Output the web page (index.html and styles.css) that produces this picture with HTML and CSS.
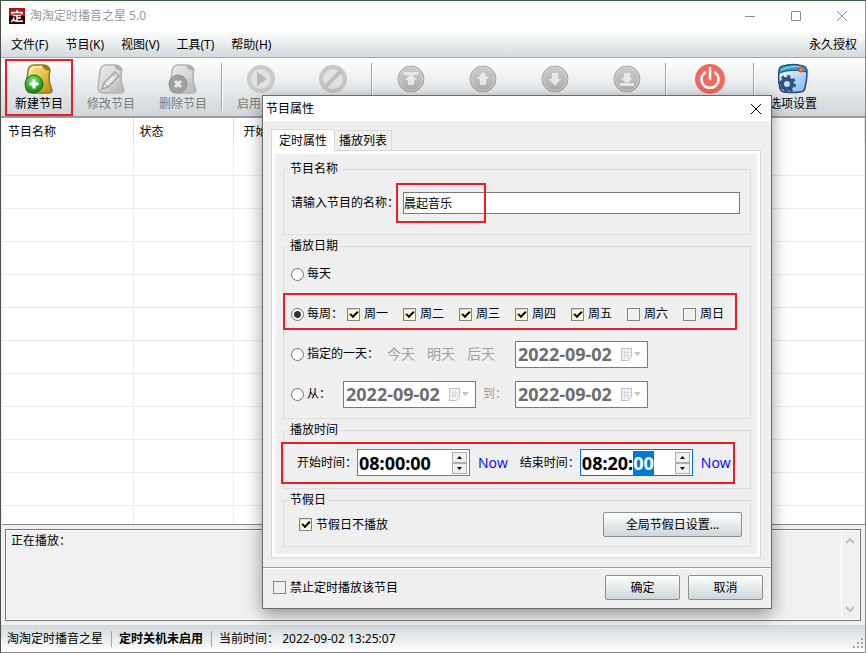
FILE: index.html
```html
<!DOCTYPE html>
<html lang="zh-CN">
<head>
	<meta charset="UTF-8">
	<title>淘淘定时播音之星 5.0</title>
	<link rel="stylesheet" href="styles.css">
</head>
<body>
	<svg class="defs" width="0" height="0" aria-hidden="true">
		<defs>
			<linearGradient id="gold" x1="0" y1="0" x2="1" y2="1">
				<stop offset="0" stop-color="#fbe88a"/><stop offset=".5" stop-color="#e6c352"/><stop offset="1" stop-color="#b88408"/>
			</linearGradient>
			<linearGradient id="silver" x1="0" y1="0" x2="1" y2="1">
				<stop offset="0" stop-color="#ececec"/><stop offset=".5" stop-color="#d8d8d8"/><stop offset="1" stop-color="#b0b0b0"/>
			</linearGradient>
			<radialGradient id="green" cx=".45" cy=".3" r=".7">
				<stop offset="0" stop-color="#8fe07c"/><stop offset=".6" stop-color="#35ad30"/><stop offset="1" stop-color="#0d7a12"/>
			</radialGradient>
			<linearGradient id="ball" x1="0" y1="0" x2="0" y2="1">
				<stop offset="0" stop-color="#cdcdcd"/><stop offset="1" stop-color="#adadad"/>
			</linearGradient>
			<linearGradient id="sky" x1="0" y1="0" x2="1" y2="1">
				<stop offset="0" stop-color="#ffffff"/><stop offset="1" stop-color="#79b8f2"/>
			</linearGradient>
			<path id="page" d="M5 8Q6 2 11 2H20Q24 2 26 5L27 7Q25 16 27 21L29 27Q29 30 25 30H9Q3 30 3 24Z"/>
			<path id="fold" d="M20 3Q21 7 27 7Q25 4 20 3Z"/>
		</defs>
	</svg>

	<div class="window">
		<header class="titlebar">
			<svg class="logo" viewBox="0 0 16 16">
				<rect width="16" height="16" fill="#3a0000"/><rect width="16" height="8" fill="#b01414"/>
				<path d="M8 2v2M3 6.500V4.500h10v2M4 7.500h8M8 7.500v5M8 10h4M5 9.500c0 2-1 3-3 4.500M4 12c2 1 5 1.500 10 1" fill="none" stroke="#fff" stroke-width="1.500"/>
			</svg>
			<span class="title">淘淘定时播音之星 5.0</span>
			<div class="win-buttons">
				<button aria-label="最小化"><svg viewBox="0 0 12 12"><path d="M1 6.5h10"/></svg></button>
				<button aria-label="最大化"><svg viewBox="0 0 12 12"><path d="M1.500 1.500h9v9h-9z"/></svg></button>
				<button aria-label="关闭"><svg viewBox="0 0 12 12"><path d="M1 1l10 10M11 1L1 11"/></svg></button>
			</div>
		</header>

		<nav class="menubar">
			<a href="#">文件(F)</a>
			<a href="#">节目(K)</a>
			<a href="#">视图(V)</a>
			<a href="#">工具(T)</a>
			<a href="#">帮助(H)</a>
			<a href="#" class="licence">永久授权</a>
		</nav>

		<div class="toolbar">
			<button class="tool marked">
				<svg viewBox="0 0 32 32">
					<use href="#page" fill="url(#gold)" stroke="#9a7414" stroke-width="1.500"/>
					<use href="#fold" fill="#b88a1c" stroke="#8a6408"/>
					<path d="M7 10Q8 4 12 4h7" fill="none" stroke="#fff8c8" stroke-width="1.500"/>
					<circle cx="11" cy="21" r="9" fill="url(#green)" stroke="#16701a"/>
					<path d="M11 16.500v9M6.500 21h9" stroke="#fff" stroke-width="3"/>
				</svg>
				<span>新建节目</span>
			</button>
			<button class="tool" disabled>
				<svg viewBox="0 0 32 32">
					<use href="#page" fill="url(#silver)" stroke="#b4b4b4" stroke-width="1.500"/>
					<use href="#fold" fill="#b4b4b4" stroke="#a6a6a6"/>
					<path d="M7 26l2-6L20 9l4 4-11 11z" fill="#e6e6e6" stroke="#a6a6a6" stroke-width="1.500"/>
					<path d="M18 11l4 4M9 20l4 4" stroke="#a6a6a6"/>
				</svg>
				<span>修改节目</span>
			</button>
			<button class="tool" disabled>
				<svg viewBox="0 0 32 32">
					<use href="#page" fill="url(#silver)" stroke="#b4b4b4" stroke-width="1.500"/>
					<use href="#fold" fill="#b4b4b4" stroke="#a6a6a6"/>
					<circle cx="11" cy="21" r="9" fill="#a0a0a0" stroke="#8e8e8e"/>
					<path d="M8 18l6 6M14 18l-6 6" stroke="#e8e8e8" stroke-width="3"/>
				</svg>
				<span>删除节目</span>
			</button>
			<i class="sep"></i>
			<button class="tool" disabled>
				<svg viewBox="0 0 32 32">
					<circle cx="16" cy="16" r="12" fill="#e2e2e2" stroke="#cacaca" stroke-width="4"/>
					<path d="M12 9l10 7-10 7z" fill="#b8b8b8"/>
				</svg>
				<span>启用节目</span>
			</button>
			<button class="tool" disabled aria-label="停用节目">
				<svg viewBox="0 0 32 32">
					<circle cx="16" cy="16" r="12" fill="#e2e2e2" stroke="#c6c6c6" stroke-width="4"/>
					<path d="M8 24L24 8" stroke="#c0c0c0" stroke-width="4"/>
				</svg>
			</button>
			<i class="sep"></i>
			<button class="tool" disabled aria-label="置顶">
				<svg viewBox="0 0 32 32">
					<circle cx="16" cy="16" r="13" fill="url(#ball)" stroke="#a6a6a6"/><circle cx="16" cy="16" r="11.500" fill="none" stroke="#d2d2d2"/>
					<path d="M9 9h14v3H9zM16 11l6 6h-3v5h-6v-5h-3z" fill="#e8e8e8"/>
				</svg>
			</button>
			<button class="tool" disabled aria-label="上移">
				<svg viewBox="0 0 32 32">
					<circle cx="16" cy="16" r="13" fill="url(#ball)" stroke="#a6a6a6"/><circle cx="16" cy="16" r="11.500" fill="none" stroke="#d2d2d2"/>
					<path d="M16 9l6 7h-3v6h-6v-6h-3z" fill="#e8e8e8"/>
				</svg>
			</button>
			<button class="tool" disabled aria-label="下移">
				<svg viewBox="0 0 32 32">
					<circle cx="16" cy="16" r="13" fill="url(#ball)" stroke="#a6a6a6"/><circle cx="16" cy="16" r="11.500" fill="none" stroke="#d2d2d2"/>
					<path d="M16 23l6-7h-3v-6h-6v6h-3z" fill="#e8e8e8"/>
				</svg>
			</button>
			<button class="tool" disabled aria-label="置底">
				<svg viewBox="0 0 32 32">
					<circle cx="16" cy="16" r="13" fill="url(#ball)" stroke="#a6a6a6"/><circle cx="16" cy="16" r="11.500" fill="none" stroke="#d2d2d2"/>
					<path d="M9 20h14v3H9zM16 21l6-6h-3v-5h-6v5h-3z" fill="#e8e8e8"/>
				</svg>
			</button>
			<i class="sep"></i>
			<button class="tool wide" aria-label="定时关机">
				<svg viewBox="0 0 32 32">
					<circle cx="16" cy="16" r="15" fill="#ef6a62"/>
					<path d="M11 9.500a8.500 8.500 0 1 0 10 0M16 5v11" fill="none" stroke="#fff" stroke-width="2.500" stroke-linecap="round"/>
				</svg>
			</button>
			<i class="sep"></i>
			<button class="tool">
				<svg viewBox="0 0 32 32">
					<path d="M6 3q10-3 20 0 4 1 4 6 0 8-2 16-1 4-5 4-8 1-15 0-4 0-5-4Q1 17 2 8q0-4 4-5z" fill="url(#sky)" stroke="#29487c" stroke-width="1.500"/>
					<path d="M6 3q10-3 20 0 4 1 4 6-14-4-28 1Q2 4 6 3z" fill="#25a6cf" stroke="#29487c"/>
					<path d="M4 7q10-5 21-3" fill="none" stroke="#9ce6f6"/>
					<circle cx="24" cy="6.500" r="2.500" fill="#ff7a2d" stroke="#c24a10"/>
					<circle cx="10" cy="21" r="5" fill="none" stroke="#34507f" stroke-width="4"/>
					<circle cx="10" cy="21" r="7.500" fill="none" stroke="#34507f" stroke-width="3" stroke-dasharray="3 2.890"/>
				</svg>
				<span>选项设置</span>
			</button>
		</div>

		<main class="list">
			<table>
				<thead>
					<tr><th class="c-name">节目名称</th><th class="c-state">状态</th><th>开始时间</th></tr>
				</thead>
				<tbody>
					<tr><td></td><td></td><td></td></tr>
					<tr><td></td><td></td><td></td></tr>
					<tr><td></td><td></td><td></td></tr>
					<tr><td></td><td></td><td></td></tr>
					<tr><td></td><td></td><td></td></tr>
					<tr><td></td><td></td><td></td></tr>
					<tr><td></td><td></td><td></td></tr>
					<tr><td></td><td></td><td></td></tr>
					<tr><td></td><td></td><td></td></tr>
					<tr><td></td><td></td><td></td></tr>
					<tr><td></td><td></td><td></td></tr>
					<tr><td></td><td></td><td></td></tr>
				</tbody>
			</table>
		</main>

		<section class="playing">
			<textarea readonly aria-label="正在播放">正在播放：</textarea>
			<div class="scroll">
				<svg viewBox="0 0 8 6"><path d="M0 5l4-4 4 4"/></svg>
				<svg viewBox="0 0 8 6"><path d="M0 1l4 4 4-4"/></svg>
			</div>
		</section>

		<footer class="status">
			<span>淘淘定时播音之星</span>
			<b>定时关机未启用</b>
			<span>当前时间：&nbsp;2022-09-02 13:25:07</span>
			<svg class="grip" viewBox="0 0 11 11"><path d="M8 0h2v2H8zM4 4h2v2H4zM8 4h2v2H8zM0 8h2v2H0zM4 8h2v2H4zM8 8h2v2H8z"/></svg>
		</footer>
	</div>

	<form class="dialog" role="dialog" aria-labelledby="dlg-title" onsubmit="return false">
		<div class="dlg-title">
			<span id="dlg-title">节目属性</span>
			<button type="button" aria-label="关闭"><svg viewBox="0 0 12 12"><path d="M1 1l10 10M11 1L1 11"/></svg></button>
		</div>

		<div class="dlg-body">
			<div class="tabs" role="tablist">
				<button type="button" role="tab" class="tab on" aria-selected="true">定时属性</button>
				<button type="button" role="tab" class="tab">播放列表</button>
			</div>
			<div class="pane">
				<fieldset class="f-name">
					<legend>节目名称</legend>
					<label for="pname">请输入节目的名称：</label>
					<input type="text" id="pname" value="晨起音乐">
				</fieldset>

				<fieldset class="f-date">
					<legend>播放日期</legend>
					<div class="row">
						<label class="opt"><input type="radio" name="mode">每天</label>
					</div>
					<div class="row week">
						<label class="opt"><input type="radio" name="mode" checked>每周：</label>
						<label class="day"><input type="checkbox" checked>周一</label>
						<label class="day"><input type="checkbox" checked>周二</label>
						<label class="day"><input type="checkbox" checked>周三</label>
						<label class="day"><input type="checkbox" checked>周四</label>
						<label class="day"><input type="checkbox" checked>周五</label>
						<label class="day"><input type="checkbox">周六</label>
						<label class="day"><input type="checkbox">周日</label>
					</div>
					<div class="row once">
						<label class="opt"><input type="radio" name="mode">指定的一天：</label>
						<div class="quick">
							<a href="#">今天</a>
							<a href="#">明天</a>
							<a href="#">后天</a>
						</div>
						<div class="date">
							<input type="text" value="2022-09-02" aria-label="日期" disabled>
							<svg viewBox="0 0 20 13"><path d="M.5.5h10v8l-3 4h-7z" fill="#f2f2f6" stroke="#c3bfc4"/><path d="M2 4.500h7M2 7.500h7M3.500 3v7M6.500 3v7" stroke="#d6d9e6"/><path d="M13 4h7l-3.500 4z" fill="#c4c4ba"/></svg>
						</div>
					</div>
					<div class="row range">
						<label class="opt"><input type="radio" name="mode">从：</label>
						<div class="date">
							<input type="text" value="2022-09-02" aria-label="开始日期" disabled>
							<svg viewBox="0 0 20 13"><path d="M.5.5h10v8l-3 4h-7z" fill="#f2f2f6" stroke="#c3bfc4"/><path d="M2 4.500h7M2 7.500h7M3.500 3v7M6.500 3v7" stroke="#d6d9e6"/><path d="M13 4h7l-3.500 4z" fill="#c4c4ba"/></svg>
						</div>
						<label class="to" for="dto">到：</label>
						<div class="date">
							<input type="text" id="dto" value="2022-09-02" disabled>
							<svg viewBox="0 0 20 13"><path d="M.5.5h10v8l-3 4h-7z" fill="#f2f2f6" stroke="#c3bfc4"/><path d="M2 4.500h7M2 7.500h7M3.500 3v7M6.500 3v7" stroke="#d6d9e6"/><path d="M13 4h7l-3.500 4z" fill="#c4c4ba"/></svg>
						</div>
					</div>
				</fieldset>

				<fieldset class="f-time">
					<legend>播放时间</legend>
					<label for="tstart">开始时间：</label>
					<div class="time">
						<input type="text" id="tstart" value="08:00:00">
						<div class="spin">
							<button type="button" aria-label="增加"><svg viewBox="0 0 5 3"><path d="M0 3h5L2.500 0z"/></svg></button>
							<button type="button" aria-label="减少"><svg viewBox="0 0 5 3"><path d="M0 0h5L2.500 3z"/></svg></button>
						</div>
					</div>
					<a href="#" class="now">Now</a>
					<label for="tend">结束时间：</label>
					<div class="time">
						<input type="text" id="tend" value="08:20:00">
						<div class="spin">
							<button type="button" aria-label="增加"><svg viewBox="0 0 5 3"><path d="M0 3h5L2.500 0z"/></svg></button>
							<button type="button" aria-label="减少"><svg viewBox="0 0 5 3"><path d="M0 0h5L2.500 3z"/></svg></button>
						</div>
					</div>
					<a href="#" class="now">Now</a>
				</fieldset>

				<fieldset class="f-holiday">
					<legend>节假日</legend>
					<label class="day"><input type="checkbox" checked>节假日不播放</label>
					<button type="button" class="btn btn-wide">全局节假日设置...</button>
				</fieldset>
			</div>
		</div>

		<div class="dlg-foot">
			<label class="day"><input type="checkbox">禁止定时播放该节目</label>
			<button type="submit" class="btn">确定</button>
			<button type="button" class="btn">取消</button>
		</div>
	</form>

	<script>
		// put the caret on the seconds of the end time
		var tend = document.getElementById("tend");
		tend.focus();
		tend.setSelectionRange(6,8);
	</script>
</body>
</html>
```
FILE: styles.css
```css
*,*::before,*::after{
	box-sizing: border-box;
}
body{
	margin: 0;
	font: 12px/16px "Noto Sans", "Noto Sans CJK SC", sans-serif;
	color: #000;
	background: #8f9a98;
}
button,input,textarea{
	font: inherit;
	color: inherit;
	margin: 0;
	padding: 0;
	border: none;
	border-radius: 0;
	outline: none;
	background: none;
}
a{
	color: inherit;
	text-decoration: none;
}
svg{
	display: block;
}
.defs{
	position: absolute;
}

/* main window */
.window{
	display: flex;
	flex-direction: column;
	height: 100vh;
	border: 1px solid #8b8b8b;
	border-top-color: #3c5a3e;
	border-left-color: #4a4f4c;
	background: #f0f0f0;
}
.titlebar{
	display: flex;
	align-items: center;
	height: 30px;
	padding-left: 8px;
	background: #fff;
	color: #999;
}
.logo{
	width: 16px;
	height: 16px;
	margin-right: 5px;
}
.win-buttons{
	display: flex;
	margin-left: auto;
}
.win-buttons button{
	display: flex;
	align-items: center;
	justify-content: center;
	width: 46px;
	height: 30px;
}
.win-buttons svg,.dlg-title svg{
	width: 12px;
	height: 12px;
	fill: none;
	stroke: #8c8c8c;
}
.menubar{
	display: flex;
	align-items: center;
	gap: 17px;
	height: 27px;
	padding: 2px 8px 0 10px;
	border-bottom: 1px solid #a9a9a9;
	background: linear-gradient(#fff,#d3dadd);
}
.licence{
	margin-left: auto;
}
.toolbar{
	display: flex;
	height: 60px;
	padding-left: 2px;
	border-bottom: 2px solid #9c99a3;
	background: linear-gradient(#fff,#cfd7db);
}
.tool{
	display: flex;
	flex-direction: column;
	align-items: center;
	gap: 1px;
	width: 72px;
	padding-top: 5px;
}
.tool svg{
	width: 32px;
	height: 32px;
}
.tool:disabled{
	color: #7b7b7b;
}
.wide{
	width: 82px;
}
.marked{
	position: relative;
}
.marked::after{
	content: "";
	position: absolute;
	inset: 1px 2px 0;
	border: 2px solid #ed1c24;
}
.sep{
	width: 6px;
	padding: 5px 2px 3px;
}
.sep::before{
	content: "";
	display: block;
	width: 2px;
	height: 48px;
	border-left: 1px solid #a5a5a5;
	border-right: 1px solid #fff;
}
.list{
	flex: 1;
	overflow: hidden;
	margin-left: 1px;
	background: #fff;
	border-bottom: 1px solid #828790;
}
.list table{
	width: 100%;
	table-layout: fixed;
	border-collapse: collapse;
}
.list th{
	height: 24px;
	padding: 4px 6px 0;
	font-weight: normal;
	text-align: left;
	border-right: 1px solid #dedede;
}
.list th+th+th{
	padding-left: 10px;
}
.c-name{
	width: 131px;
}
.c-state{
	width: 100px;
}
.list td{
	height: 33px;
	padding: 0;
	border-right: 1px solid #ededed;
	border-bottom: 1px solid #ededed;
}
.playing{
	display: flex;
	height: 92px;
	margin: 4px;
	border: 1px solid #777;
}
.playing textarea{
	flex: 1;
	resize: none;
	overflow: hidden;
	padding: 2px 4px;
	border: 1px solid #fff;
}
.scroll{
	display: flex;
	flex-direction: column;
	justify-content: space-between;
	width: 18px;
	padding: 7px 4px;
	border: 1px solid #fff;
	border-left: none;
}
.scroll svg{
	width: 8px;
	height: 6px;
	fill: none;
	stroke: #bdbdbd;
	stroke-width: 2;
}
.status{
	display: flex;
	align-items: center;
	height: 27px;
	padding-left: 6px;
	background: linear-gradient(#d0d8dc,#fff);
}
.status b,.status b+span{
	margin-left: 8px;
	padding-left: 7px;
	border-left: 1px solid #a5a5a5;
}
.grip{
	width: 11px;
	height: 11px;
	margin: 10px 1px 0 auto;
	fill: #a8a8a8;
}

/* program dialog, floats over the window */
.dialog{
	position: absolute;
	left: 262px;
	top: 95px;
	width: 510px;
	border: 1px solid #6a6a6a;
	background: #efefef;
	box-shadow: 0 5px 16px rgba(0,0,0,.4);
	white-space: nowrap;
}
.dlg-title{
	display: flex;
	align-items: center;
	justify-content: space-between;
	height: 25px;
	padding: 0 9px 0 3px;
	background: #fff;
}
.dlg-title svg{
	stroke: #000;
}
.dlg-body{
	padding: 8px 10px 9px 8px;
}
.tabs{
	display: flex;
	align-items: flex-end;
	position: relative;
	margin-bottom: -1px;
}
.tab{
	height: 21px;
	padding: 0 4px;
	border: 1px solid #d9d9d9;
	border-left: none;
}
.tab.on{
	height: 22px;
	padding: 0 7px;
	border-left: 1px solid #d9d9d9;
	border-bottom: none;
	background: #fff;
}
.pane{
	display: flex;
	flex-direction: column;
	gap: 3px;
	padding: 10px 9px 10px 11px;
	border: 1px solid #d9d9d9;
	box-shadow: inset 0 0 0 3px #fff;
}
fieldset{
	display: flex;
	align-items: center;
	min-width: 0;
	margin: 0;
	padding: 0 7px;
	border: 1px solid #dcdcdc;
}
legend{
	height: 16px;
	padding: 0 2px 0 0;
	margin-left: -1px;
}
.f-name{
	position: relative;
	padding-top: 15px;
	padding-bottom: 20px;
	padding-right: 10px;
}
.f-name input{
	flex: 1;
	height: 22px;
	margin-left: 4px;
	border: 1px solid #7a7a7a;
	background: #fff;
}
.f-name::after,.week::after,.f-time::after{
	content: "";
	position: absolute;
	border: 2px solid #ed1c24;
	pointer-events: none;
}
.f-name::after{
	left: 112px;
	top: 6px;
	width: 90px;
	height: 40px;
}
.f-date{
	display: block;
	padding-bottom: 4px;
}
.row{
	display: flex;
	align-items: center;
	height: 40px;
}
.opt,.day{
	display: flex;
	align-items: center;
}
.opt{
	gap: 3px;
}
.day{
	gap: 4px;
}
input[type=radio],input[type=checkbox]{
	appearance: none;
	flex: none;
	width: 13px;
	height: 13px;
	border: 1px solid #707070;
}
input[type=radio]{
	border-radius: 50%;
	background: #fff;
}
input[type=radio]:checked{
	background: radial-gradient(#333 0 3px,#fff 4px);
}
input[type=checkbox]{
	border-color: #858585;
}
input[type=checkbox]:checked{
	background: #fff8e0;
	box-shadow: inset 1px 1px #ece0b8;
}
input[type=checkbox]:checked::before{
	content: "";
	display: block;
	width: 8px;
	height: 5px;
	margin: 2px 0 0 2px;
	border: solid #000;
	border-width: 0 0 2px 2px;
	transform: rotate(-45deg);
}
.week{
	position: relative;
	gap: 15px;
}
.week .opt{
	margin-right: -11px;
}
.week::after{
	inset: -1px 6px 4px -8px;
}
.quick{
	display: flex;
	gap: 12px;
	margin: 0 20px 0 8px;
	font-size: 14px;
	color: #a0a0a0;
}
.date,.time{
	display: flex;
	align-items: center;
	height: 27px;
	border: 1px solid #7a7a7a;
	background: #fff;
	font-size: 18px;
	font-weight: bold;
}
.date{
	width: 133px;
	padding: 0 6px 0 2px;
	color: #6d6d6d;
}
.date input,.time input{
	flex: 1;
	width: 0;
	height: 25px;
}
.date svg{
	width: 20px;
	height: 13px;
}
.range .opt{
	margin-right: 12px;
}
.to{
	margin: 0 8px 0 7px;
	color: #a0a0a0;
}
.f-time{
	position: relative;
	padding: 11px 7px 12px 13px;
}
.f-time legend,.f-holiday legend{
	margin-left: -7px;
}
.f-time::after{
	inset: 4px 15px 4px -3px;
}
.time{
	width: 113px;
	padding: 0 2px 0 1px;
}
.time:focus-within{
	border-color: #0078d7;
}
.time ::selection{
	color: #fff;
	background: #0078d7;
}
.spin button{
	display: flex;
	align-items: center;
	justify-content: center;
	width: 15px;
	height: 11px;
	border: 1px solid #adadad;
	background: #f0f0f0;
}
.spin svg{
	width: 5px;
	height: 3px;
}
.now{
	margin: 0 12px 0 8px;
	font-family: "Open Sans", sans-serif;
	font-size: 14px;
	color: #00f;
}
.f-holiday{
	padding: 4px 8px 9px 15px;
}
.f-holiday legend{
	margin-left: -9px;
}
.btn{
	width: 75px;
	height: 25px;
	border: 1px solid #8c8f92;
	border-radius: 2px;
	background: linear-gradient(#fff,#cdd6da);
}
.btn-wide{
	width: 139px;
	margin-left: auto;
}
.dlg-foot{
	display: flex;
	align-items: center;
	gap: 8px;
	padding: 7px 8px 8px 10px;
	border-top: 1px solid #a0a0a0;
	box-shadow: inset 0 1px #fff;
}
.dlg-foot .day{
	margin-right: auto;
}
```
